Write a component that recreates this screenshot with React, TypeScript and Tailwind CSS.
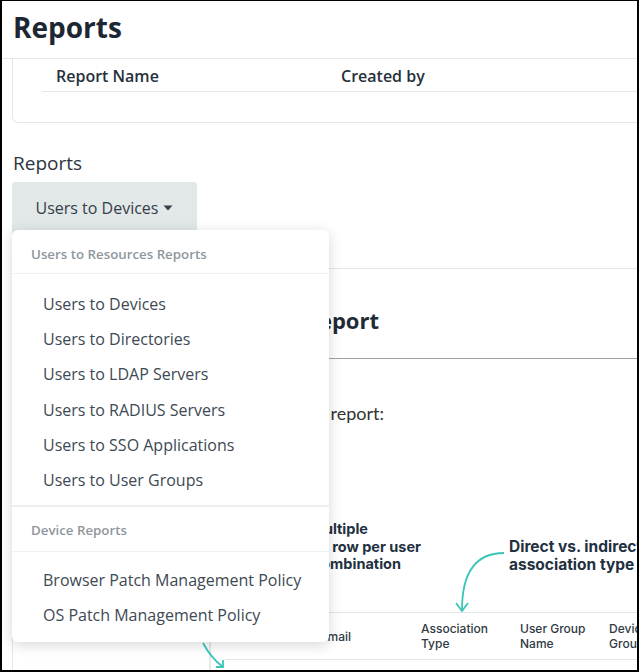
import React from "react";

const menuItems1 = [
  "Users to Devices",
  "Users to Directories",
  "Users to LDAP Servers",
  "Users to RADIUS Servers",
  "Users to SSO Applications",
  "Users to User Groups",
];
const menuItems2 = ["Browser Patch Management Policy", "OS Patch Management Policy"];

function Caret() {
  return (
    <svg width="10" height="6" viewBox="0 0 10 6" className="ml-[5px]">
      <path d="M0.5 0.5 L9.5 0.5 L5 5.5 Z" fill="#343e49" />
    </svg>
  );
}

function MenuHeader({ label, h }: { label: string; h: string }) {
  return (
    <div className={`${h} px-[19px] border-b border-[#edf1f1] text-[13.3px] leading-[20px] font-semibold text-[#8f979d]`}>
      {label}
    </div>
  );
}

function MenuItem({ label }: { label: string }) {
  return (
    <div className="h-[35.2px] flex items-center px-[31px] whitespace-nowrap text-[16px] text-[#3e4953]">{label}</div>
  );
}

export default function App() {
  return (
    <div className="relative w-[639px] h-[672px] overflow-hidden bg-white border-t border-l-2 border-r-2 border-b-2 border-black font-['Open_Sans',sans-serif]">
      {/* Header */}
      <div className="h-[58px] border-b border-[#e5e8ea] pl-[11px] pt-[7px]">
        <h1 className="text-[28px] leading-[38px] font-bold text-[#1d2733]">Reports</h1>
      </div>

      {/* Saved reports card */}
      <div className="ml-[10px] mr-[-20px] h-[64px] border-l border-b border-r border-[#e1e6e7] rounded-bl-[6px]">
        <div className="ml-[29px] flex border-b border-[#e4e8e9] pt-[7px] pb-[5px] text-[16px] leading-[20px] font-semibold text-[#27313c]">
          <div className="w-[299px] pl-[14px]">Report Name</div>
          <div>Created by</div>
        </div>
      </div>

      <div className="mt-[28px] ml-[11px] text-[19px] leading-[24px] text-[#2c3540]">Reports</div>

      <button className="mt-[7px] ml-[10px] w-[185px] h-[52px] rounded-t-[3px] bg-[#e2e7e8] flex items-center justify-center text-[16px] text-[#343e49]">
        <span>Users to Devices</span>
        <Caret />
      </button>

      {/* Report panel */}
      <div className="mt-[34px] ml-[10px] h-[404px] border-l border-t border-[#e3e7e8] overflow-hidden">
        <div className="mt-[36px] w-[366px] flex justify-end whitespace-nowrap text-[22px] leading-[30px] font-bold text-[#1f2a35]">
          Users to Devices Report
        </div>
        <div className="mt-[23px] ml-[20px] border-t border-[#a2a2a2]" />
        <div className="mt-[42px] w-[371px] flex justify-end whitespace-nowrap font-['Lato',sans-serif] text-[18px] leading-[24px] text-[#333333]">
          The following is a sample of the report:
        </div>

        {/* Sample picture */}
        <div className="mt-[15px] flex flex-col font-['Inter',sans-serif]">
          <div className="relative h-[172px]">
            <div className="absolute left-0 top-[80px] text-[14.5px] leading-[17.5px] font-bold text-[#223040] whitespace-nowrap">
              <div className="w-[355px] flex justify-end">Users with multiple</div>
              <div className="w-[408px] flex justify-end">devices have one row per user</div>
              <div className="w-[388px] flex justify-end">and device combination</div>
            </div>
            <div className="absolute left-[496px] top-[98px] text-[15.5px] leading-[17.5px] font-bold text-[#223040] whitespace-nowrap">
              <div>Direct vs. indirect</div>
              <div>association type</div>
            </div>
            <svg className="absolute left-0 top-0" width="640" height="172" viewBox="0 0 640 172" fill="none">
              <path d="M491 113 C 466 113, 449 128, 449 170" stroke="#3cc5b8" strokeWidth="1.8" />
              <path d="M443 163 L449 171 L455 163" stroke="#3cc5b8" strokeWidth="1.8" />
            </svg>
          </div>

          <div className="relative flex ml-[196px] h-[60px]">
            <svg className="absolute left-[-9px] top-[20px]" width="30" height="40" viewBox="0 0 30 40" fill="none">
              <path d="M3 11 Q 11 26 23 35" stroke="#3cc5b8" strokeWidth="1.8" />
              <path d="M23 28 L23 35 L16 35" stroke="#3cc5b8" strokeWidth="1.8" />
            </svg>
            <div className="w-[3px] border-l border-r border-[#e6e8e9]" />
            <div className="flex-1">
              <div className="flex items-center h-[47px] border-t border-[#e3e5e6] text-[12px] leading-[15px] font-medium text-[#2f3a44] whitespace-nowrap">
                <div className="w-[140px] flex justify-end">Email</div>
                <div className="ml-[70px] w-[99px]">
                  <div>Association</div>
                  <div>Type</div>
                </div>
                <div className="w-[89px]">
                  <div>User Group</div>
                  <div>Name</div>
                </div>
                <div>
                  <div>Device</div>
                  <div>Group</div>
                </div>
              </div>
              <div className="ml-[14px] border-t border-[#e3e5e6]" />
            </div>
          </div>
        </div>
      </div>

      {/* Dropdown menu */}
      <div className="absolute left-[10px] top-[229px] w-[317px] bg-white rounded-[6px] shadow-[0_3px_14px_rgba(0,0,0,0.16)]">
        <MenuHeader label="Users to Resources Reports" h="h-[44px] pt-[14px]" />
        <div className="pt-[12.5px] pb-[7px] border-b-2 border-[#eeeeee]">
          {menuItems1.map((t) => (
            <MenuItem key={t} label={t} />
          ))}
        </div>
        <MenuHeader label="Device Reports" h="h-[45px] pt-[13px]" />
        <div className="pt-[11px] pb-[9px]">
          {menuItems2.map((t) => (
            <MenuItem key={t} label={t} />
          ))}
        </div>
      </div>
    </div>
  );
}
